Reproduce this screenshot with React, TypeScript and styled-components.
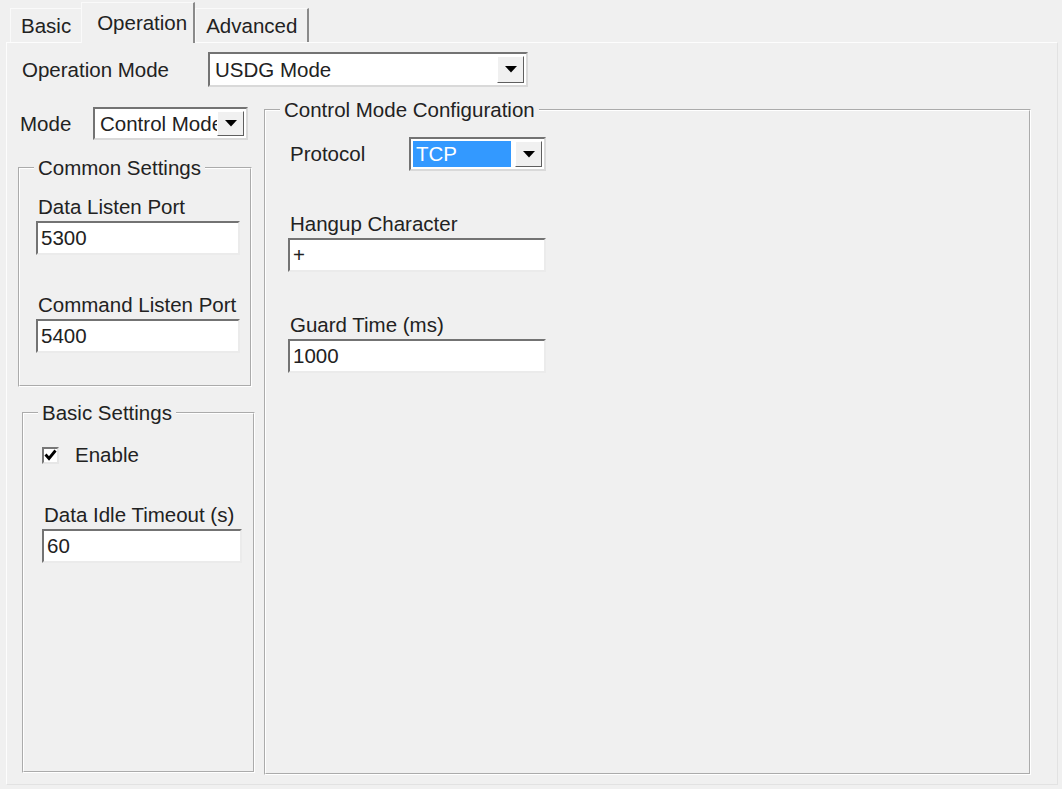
import React from "react"
import styled, { createGlobalStyle } from "styled-components"

const GlobalStyle = createGlobalStyle`
  html, body {
    margin: 0;
    padding: 0;
    background: #f0f0f0;
  }
  body {
    font-family: "Liberation Sans", Arial, sans-serif;
    font-size: 20.5px;
    color: #222222;
  }
`

const Window = styled.div`
  width: 1062px;
  height: 789px;
  box-sizing: border-box;
  display: flex;
  flex-direction: column;
  overflow: hidden;
  background: #f0f0f0;
`

const TabStrip = styled.div`
  display: flex;
  align-items: flex-end;
  height: 42px;
  padding-left: 10px;
  box-sizing: border-box;
  flex-shrink: 0;
`

const Tab = styled.div<{ $active?: boolean }>`
  position: relative;
  z-index: ${(p) => (p.$active ? 1 : 0)};
  display: flex;
  align-items: center;
  box-sizing: border-box;
  height: ${(p) => (p.$active ? 41 : 34)}px;
  margin-left: ${(p) => (p.$active ? -2 : 0)}px;
  margin-bottom: ${(p) => (p.$active ? -1 : 0)}px;
  padding: ${(p) => (p.$active ? "0 6px 0 15px" : "0 10px")};
  background: #f0f0f0;
  border-top: 1px solid #fafafa;
  border-left: 1px solid #fafafa;
  border-right: 2px solid #8a8a8a;
  white-space: nowrap;
`

const Panel = styled.div`
  flex: 1;
  display: flex;
  flex-direction: column;
  box-sizing: border-box;
  margin: 0 4px 4px 6px;
  padding: 9px 0 0 11px;
  border: 1px solid;
  border-color: #fdfdfd #e2e2e2 #e2e2e2 #fdfdfd;
`

const Row = styled.div<{ $h: number; $indent?: number }>`
  display: flex;
  align-items: center;
  height: ${(p) => p.$h}px;
  padding-left: ${(p) => p.$indent ?? 0}px;
`

const RowLabel = styled.span<{ $w: number; $pad?: number }>`
  width: ${(p) => p.$w}px;
  box-sizing: border-box;
  padding-left: ${(p) => p.$pad ?? 0}px;
  flex-shrink: 0;
  white-space: nowrap;
`

const Body = styled.div`
  display: flex;
  gap: 9px;
  margin-top: 11px;
`

const LeftColumn = styled.div`
  width: 237px;
  display: flex;
  flex-direction: column;
  padding-top: 9px;
`

const Group = styled.fieldset<{ $w: number; $h: number; $top?: number; $left?: number }>`
  margin: ${(p) => p.$top ?? 0}px 0 0 ${(p) => p.$left ?? 0}px;
  padding: 0;
  min-width: 0;
  box-sizing: border-box;
  width: ${(p) => p.$w}px;
  height: ${(p) => p.$h}px;
  border: 2px groove #ffffff;
`

const Legend = styled.legend`
  margin-left: 14px;
  padding: 0 4px;
  line-height: 24px;
  white-space: nowrap;
`

const GroupBody = styled.div<{ $top: number; $left: number; $gap: number }>`
  display: flex;
  flex-direction: column;
  align-items: flex-start;
  gap: ${(p) => p.$gap}px;
  padding: ${(p) => p.$top}px 0 0 ${(p) => p.$left}px;
`

const Field = styled.div`
  display: flex;
  flex-direction: column;
`

const FieldLabel = styled.span`
  line-height: 24px;
  padding-left: 2px;
  margin-bottom: 2px;
  white-space: nowrap;
`

const TextBox = styled.div<{ $w: number }>`
  width: ${(p) => p.$w}px;
  height: 34px;
  box-sizing: border-box;
  display: flex;
  align-items: center;
  padding: 0 3px;
  background: #ffffff;
  border: 2px solid;
  border-color: #737373 #ebebeb #ebebeb #737373;
`

const Combo = styled.div<{ $w: number; $h: number }>`
  width: ${(p) => p.$w}px;
  height: ${(p) => p.$h}px;
  box-sizing: border-box;
  display: flex;
  padding: 2px;
  background: #ffffff;
  border: 2px solid;
  border-color: #737373 #d9d9d9 #d9d9d9 #737373;
`

const ComboText = styled.div<{ $selected?: boolean }>`
  flex: 1;
  min-width: 0;
  overflow: hidden;
  white-space: nowrap;
  display: flex;
  align-items: center;
  padding-left: 3px;
  margin-right: ${(p) => (p.$selected ? 4 : 0)}px;
  background: ${(p) => (p.$selected ? "#3399ff" : "transparent")};
  color: ${(p) => (p.$selected ? "#ffffff" : "inherit")};
`

const ComboButton = styled.div`
  width: 27px;
  flex-shrink: 0;
  box-sizing: border-box;
  display: flex;
  align-items: center;
  justify-content: center;
  background: #f0f0f0;
  border: 1px solid;
  border-color: #ffffff #5f5f5f #5f5f5f #ffffff;
`

const CheckRow = styled.div`
  display: flex;
  align-items: center;
  gap: 16px;
  height: 24px;
`

const CheckBox = styled.div`
  width: 17px;
  height: 17px;
  box-sizing: border-box;
  display: flex;
  align-items: center;
  justify-content: center;
  background: #ffffff;
  border: 2px solid;
  border-color: #777777 #e6e6e6 #e6e6e6 #777777;
`

const Arrow = () => (
  <svg width="12" height="7" viewBox="0 0 12 7">
    <polygon points="0,0 12,0 6,6.5" fill="#000" />
  </svg>
)

const Check = () => (
  <svg width="13" height="12" viewBox="0 0 13 12">
    <polyline points="1.5,5.5 5,9.5 11.5,1.5" fill="none" stroke="#000" strokeWidth="2.8" />
  </svg>
)

const ComboBox: React.FC<{ w: number; h: number; value: string; selected?: boolean }> = ({ w, h, value, selected }) => (
  <Combo $w={w} $h={h}>
    <ComboText $selected={selected}>{value}</ComboText>
    <ComboButton>
      <Arrow />
    </ComboButton>
  </Combo>
)

const InputField: React.FC<{ label: string; value: string; w: number }> = ({ label, value, w }) => (
  <Field>
    <FieldLabel>{label}</FieldLabel>
    <TextBox $w={w}>{value}</TextBox>
  </Field>
)

const App: React.FC = () => {
  return (
    <Window>
      <GlobalStyle />
      <TabStrip>
        <Tab>Basic</Tab>
        <Tab $active>Operation</Tab>
        <Tab>Advanced</Tab>
      </TabStrip>
      <Panel>
        <Row $h={35} $indent={4}>
          <RowLabel $w={186}>Operation Mode</RowLabel>
          <ComboBox w={320} h={35} value="USDG Mode" />
        </Row>
        <Body>
          <LeftColumn>
            <Row $h={33} $indent={2}>
              <RowLabel $w={73}>Mode</RowLabel>
              <ComboBox w={155} h={33} value="Control Mode" />
            </Row>
            <Group $w={234} $h={231} $top={16}>
              <Legend>Common Settings</Legend>
              <GroupBody $top={15} $left={16} $gap={38}>
                <InputField label="Data Listen Port" value="5300" w={204} />
                <InputField label="Command Listen Port" value="5400" w={204} />
              </GroupBody>
            </Group>
            <Group $w={233} $h={372} $top={14} $left={4}>
              <Legend>Basic Settings</Legend>
              <GroupBody $top={18} $left={18} $gap={36}>
                <CheckRow>
                  <CheckBox>
                    <Check />
                  </CheckBox>
                  <span>Enable</span>
                </CheckRow>
                <InputField label="Data Idle Timeout (s)" value="60" w={200} />
              </GroupBody>
            </Group>
          </LeftColumn>
          <Group $w={767} $h={677}>
            <Legend>Control Mode Configuration</Legend>
            <GroupBody $top={15} $left={22} $gap={41}>
              <Row $h={34}>
                <RowLabel $w={121} $pad={2}>
                  Protocol
                </RowLabel>
                <ComboBox w={137} h={34} value="TCP" selected />
              </Row>
              <InputField label="Hangup Character" value="+" w={258} />
              <InputField label="Guard Time (ms)" value="1000" w={258} />
            </GroupBody>
          </Group>
        </Body>
      </Panel>
    </Window>
  )
}

export default App
